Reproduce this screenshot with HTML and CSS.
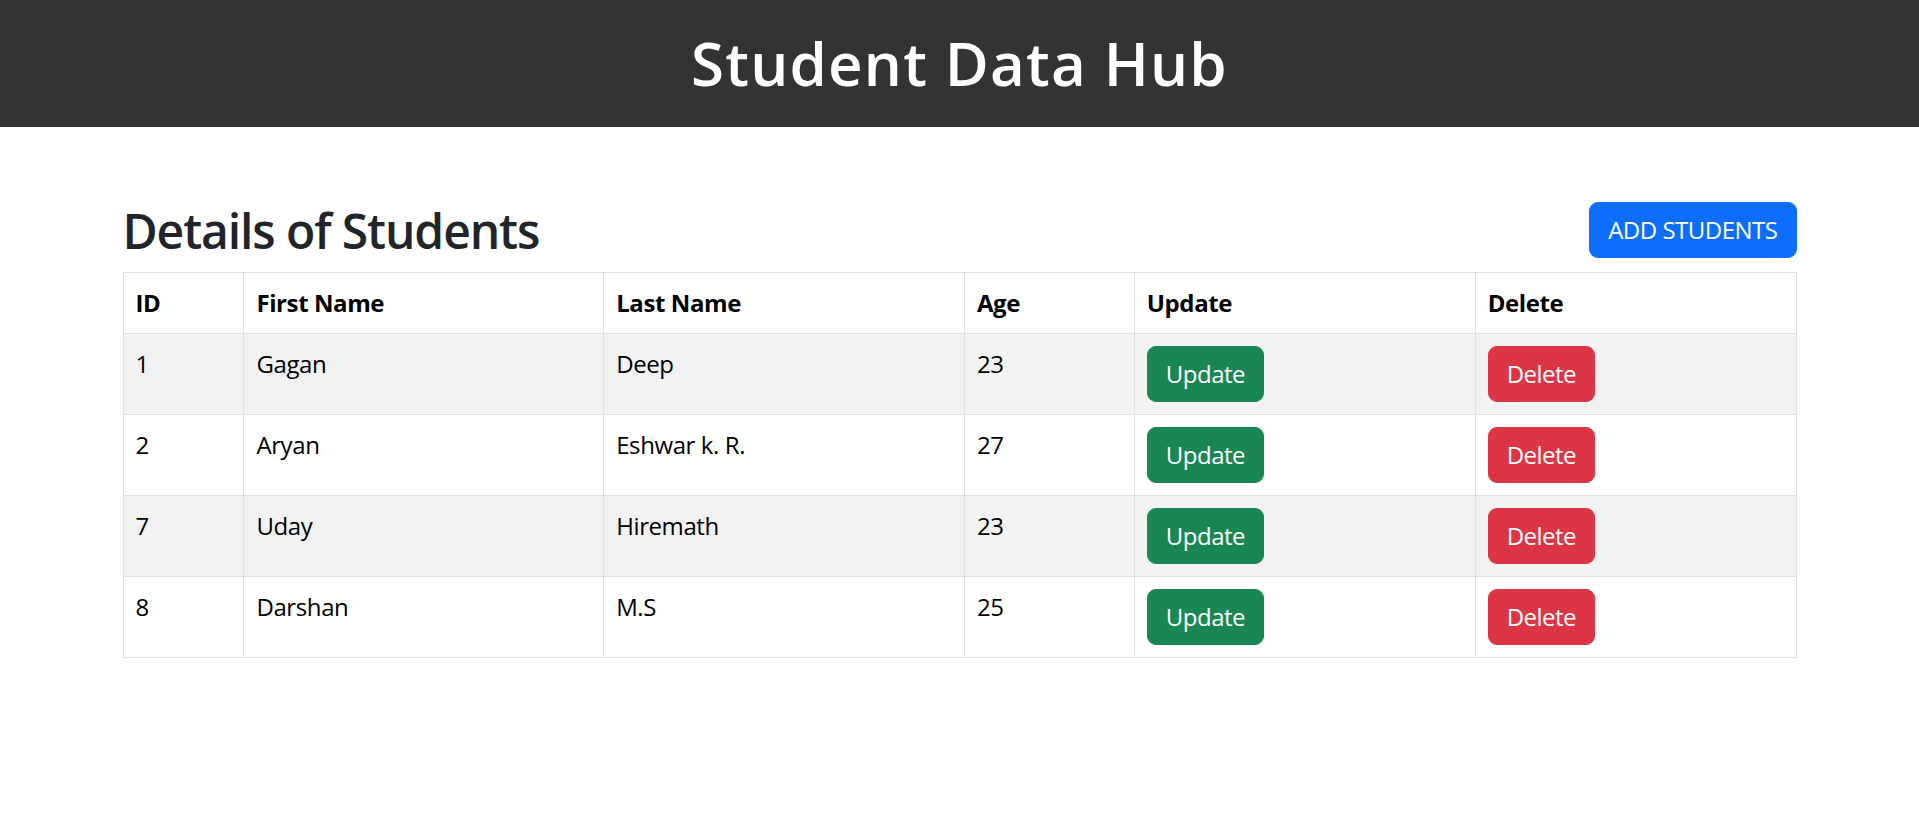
FILE: index.html
```html
<!DOCTYPE html>
<html lang="en">
<head>
<meta charset="utf-8">
<title>Student Data Hub</title>
<link rel="stylesheet" href="styles.css">
</head>
<body>
<header class="topbar">
  <h1 class="title">Student Data Hub</h1>
</header>
<main class="container">
  <div class="toolbar">
    <h2 class="heading">Details of Students</h2>
    <button class="btn btn-primary">ADD STUDENTS</button>
  </div>
  <table class="table">
    <colgroup>
      <col class="c-id"><col class="c-first"><col class="c-last"><col class="c-age"><col class="c-upd"><col class="c-del">
    </colgroup>
    <thead>
      <tr><th>ID</th><th>First Name</th><th>Last Name</th><th>Age</th><th>Update</th><th>Delete</th></tr>
    </thead>
    <tbody>
      <tr class="odd"><td>1</td><td>Gagan</td><td>Deep</td><td>23</td><td><button class="btn btn-success">Update</button></td><td><button class="btn btn-danger">Delete</button></td></tr>
      <tr><td>2</td><td>Aryan</td><td>Eshwar k. R.</td><td>27</td><td><button class="btn btn-success">Update</button></td><td><button class="btn btn-danger">Delete</button></td></tr>
      <tr class="odd"><td>7</td><td>Uday</td><td>Hiremath</td><td>23</td><td><button class="btn btn-success">Update</button></td><td><button class="btn btn-danger">Delete</button></td></tr>
      <tr><td>8</td><td>Darshan</td><td>M.S</td><td>25</td><td><button class="btn btn-success">Update</button></td><td><button class="btn btn-danger">Delete</button></td></tr>
    </tbody>
  </table>
</main>
</body>
</html>
```
FILE: styles.css
```css
* { box-sizing: border-box; }
body {
  margin: 0;
  font-family: "Open Sans", "Noto Sans", sans-serif;
  font-size: 24px;
  line-height: 36px;
  letter-spacing: -0.4px;
  color: #212529;
  background: #fff;
}
.topbar {
  background: #333333;
  padding: 27px 0 28px;
  text-align: center;
}
.title {
  margin: 0;
  color: #fff;
  font-size: 60px;
  line-height: 72px;
  font-weight: 600;
  letter-spacing: 1.2px;
}
.container {
  width: 1674px;
  margin: 0 auto;
  padding-top: 75px;
}
.toolbar {
  display: flex;
  justify-content: space-between;
  align-items: flex-start;
  margin-bottom: 12px;
}
.heading {
  margin: 0;
  font-size: 48px;
  line-height: 58px;
  font-weight: 600;
  letter-spacing: -1.1px;
  color: #212529;
}
.btn {
  font-family: inherit;
  font-size: 24px;
  line-height: 36px;
  letter-spacing: -0.5px;
  padding: 9px 18px;
  border: 1px solid transparent;
  border-radius: 9px;
  color: #fff;
  cursor: pointer;
}
.btn-primary { background: #0d6efd; border-color: #0d6efd; }
.btn-success { background: #198754; border-color: #198754; }
.btn-danger { background: #dc3545; border-color: #dc3545; }
.toolbar .btn { height: 56px; }
.table {
  width: 100%;
  border-collapse: collapse;
  color: #000;
}
.table th, .table td {
  border: 1px solid #dee2e6;
  padding: 12px;
  text-align: left;
  vertical-align: top;
}
.table th { font-weight: 700; }
.table td .btn { height: 56px; display: block; }
.table tr.odd td { background: #f2f2f2; }
.c-id { width: 121px; }
.c-first { width: 360px; }
.c-last { width: 361px; }
.c-age { width: 170px; }
.c-upd { width: 341px; }
.c-del { width: 321px; }
```
